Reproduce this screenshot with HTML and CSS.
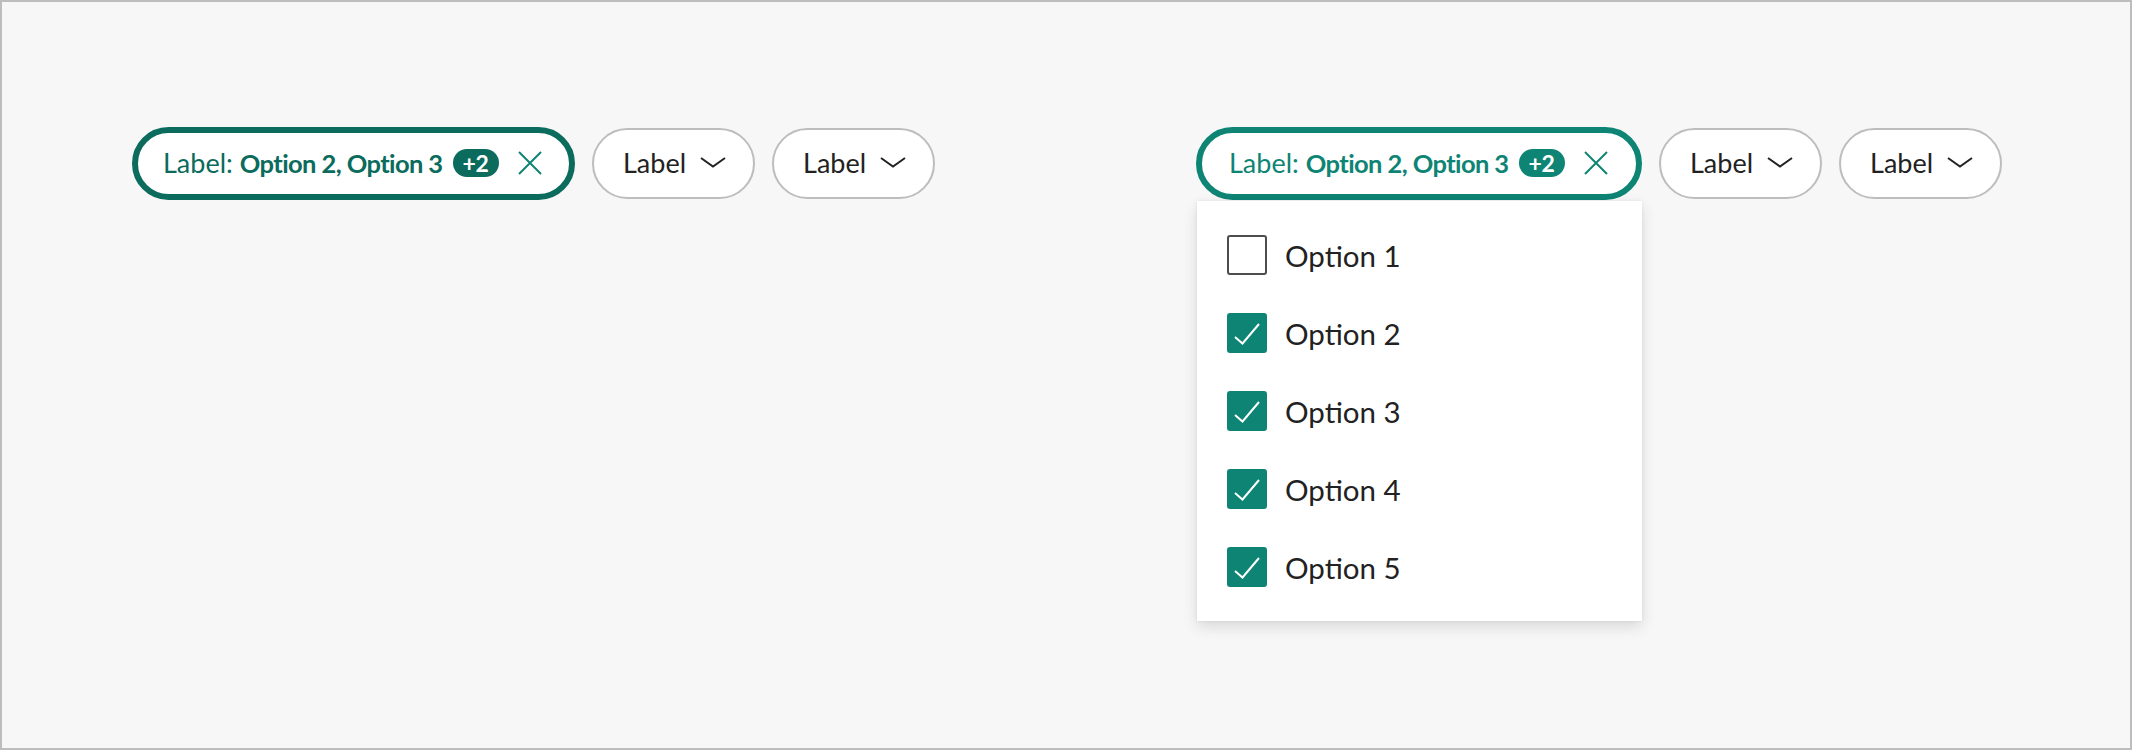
FILE: index.html
```html
<!DOCTYPE html>
<html lang="en">
<head>
<meta charset="utf-8">
<title>Filter chips</title>
<link rel="stylesheet" href="styles.css">
</head>
<body>
<div class="frame">
  <section class="half">
    <div class="chip-row">
      <div class="chip chip--selected chip--dark">
        <span class="chip-label">Label:</span>
        <span class="chip-value">Option 2, Option 3</span>
        <span class="chip-badge">+2</span>
        <svg class="chip-clear" viewBox="0 0 24 24" width="24" height="24"><path d="M1 1 L23 23 M23 1 L1 23" fill="none" stroke="currentColor" stroke-width="2"/></svg>
      </div>
      <div class="chip">
        <span class="chip-text">Label</span>
        <svg class="chip-chevron" viewBox="0 0 26 11" width="26" height="11"><path d="M1 1 L13 9.5 L25 1" fill="none" stroke="currentColor" stroke-width="2"/></svg>
      </div>
      <div class="chip">
        <span class="chip-text">Label</span>
        <svg class="chip-chevron" viewBox="0 0 26 11" width="26" height="11"><path d="M1 1 L13 9.5 L25 1" fill="none" stroke="currentColor" stroke-width="2"/></svg>
      </div>
    </div>
  </section>
  <section class="half">
    <div class="chip-row">
      <div class="chip-anchor">
        <div class="chip chip--selected chip--open">
          <span class="chip-label">Label:</span>
          <span class="chip-value">Option 2, Option 3</span>
          <span class="chip-badge">+2</span>
          <svg class="chip-clear" viewBox="0 0 24 24" width="24" height="24"><path d="M1 1 L23 23 M23 1 L1 23" fill="none" stroke="currentColor" stroke-width="2"/></svg>
        </div>
        <ul class="menu">
          <li class="menu-item"><span class="checkbox"></span><span class="menu-text">Option 1</span></li>
          <li class="menu-item"><span class="checkbox checkbox--checked"><svg viewBox="0 0 40 40" width="40" height="40"><path d="M8 24 L15.5 30.5 L32 11" fill="none" stroke="#fff" stroke-width="2"/></svg></span><span class="menu-text">Option 2</span></li>
          <li class="menu-item"><span class="checkbox checkbox--checked"><svg viewBox="0 0 40 40" width="40" height="40"><path d="M8 24 L15.5 30.5 L32 11" fill="none" stroke="#fff" stroke-width="2"/></svg></span><span class="menu-text">Option 3</span></li>
          <li class="menu-item"><span class="checkbox checkbox--checked"><svg viewBox="0 0 40 40" width="40" height="40"><path d="M8 24 L15.5 30.5 L32 11" fill="none" stroke="#fff" stroke-width="2"/></svg></span><span class="menu-text">Option 4</span></li>
          <li class="menu-item"><span class="checkbox checkbox--checked"><svg viewBox="0 0 40 40" width="40" height="40"><path d="M8 24 L15.5 30.5 L32 11" fill="none" stroke="#fff" stroke-width="2"/></svg></span><span class="menu-text">Option 5</span></li>
        </ul>
      </div>
      <div class="chip">
        <span class="chip-text">Label</span>
        <svg class="chip-chevron" viewBox="0 0 26 11" width="26" height="11"><path d="M1 1 L13 9.5 L25 1" fill="none" stroke="currentColor" stroke-width="2"/></svg>
      </div>
      <div class="chip">
        <span class="chip-text">Label</span>
        <svg class="chip-chevron" viewBox="0 0 26 11" width="26" height="11"><path d="M1 1 L13 9.5 L25 1" fill="none" stroke="currentColor" stroke-width="2"/></svg>
      </div>
    </div>
  </section>
</div>
</body>
</html>
```

FILE: styles.css
```css
* { box-sizing: border-box; }

html, body {
  margin: 0;
  padding: 0;
}

body {
  font-family: Lato, "Liberation Sans", sans-serif;
  color: #222;
  background: #f7f7f7;
}

.frame {
  width: 2132px;
  height: 750px;
  border: 2px solid #bdbdbd;
  background: #f7f7f7;
  display: flex;
}

.half {
  flex: 1 1 0;
  padding: 125px 0 0 130px;
}

.chip-row {
  display: flex;
  align-items: center;
  gap: 17px;
}

.chip-anchor {
  position: relative;
  flex: none;
}

.chip {
  flex: none;
  display: flex;
  align-items: center;
  height: 71px;
  padding: 0 27px 2px 29px;
  border: 2px solid #bdbdbd;
  border-radius: 999px;
  background: #fff;
  font-size: 27px;
  color: #222;
  white-space: nowrap;
}

.chip-text {
  margin-right: 14px;
}

.chip-chevron {
  display: block;
  color: #222;
}

.chip--selected {
  height: 73px;
  width: 443px;
  padding: 0 0 2px 25px;
  border: 6px solid #0b6b5c;
  color: #0b6b5c;
}

.chip--open {
  width: 446px;
  padding-left: 27px;
  border-color: #0e8474;
  color: #0e8474;
}

.chip-label {
  margin-right: 7px;
}

.chip-value {
  font-weight: 700;
  font-size: 25.5px;
  letter-spacing: -0.6px;
}

.chip-badge {
  flex: none;
  margin-left: 10px;
  height: 28px;
  width: 46px;
  border-radius: 14px;
  display: flex;
  align-items: center;
  justify-content: center;
  font-size: 23px;
  font-weight: 700;
  letter-spacing: -0.3px;
}

.chip--dark .chip-badge { background: #0b6b5c; color: #fff; }
.chip--open .chip-badge { background: #0e8474; color: #fff; }

.chip-clear {
  flex: none;
  display: block;
  margin-left: 19px;
  color: #0e8474;
}

.menu {
  position: absolute;
  top: calc(100% + 1px);
  left: 1px;
  width: 445px;
  margin: 0;
  padding: 15px 0;
  list-style: none;
  background: #fff;
  box-shadow: 0 6px 14px rgba(0, 0, 0, 0.12), 0 0 3px rgba(0, 0, 0, 0.08);
}

.menu-item {
  display: flex;
  align-items: center;
  padding: 19px 30px;
}

.checkbox {
  flex: none;
  width: 40px;
  height: 40px;
  margin-right: 18px;
  border: 2px solid #4d4d4d;
  border-radius: 3px;
  background: #fff;
}

.checkbox--checked {
  border: none;
  background: #0e8474;
}

.checkbox svg {
  display: block;
}

.menu-text {
  font-size: 29.5px;
  color: #222;
}
```
